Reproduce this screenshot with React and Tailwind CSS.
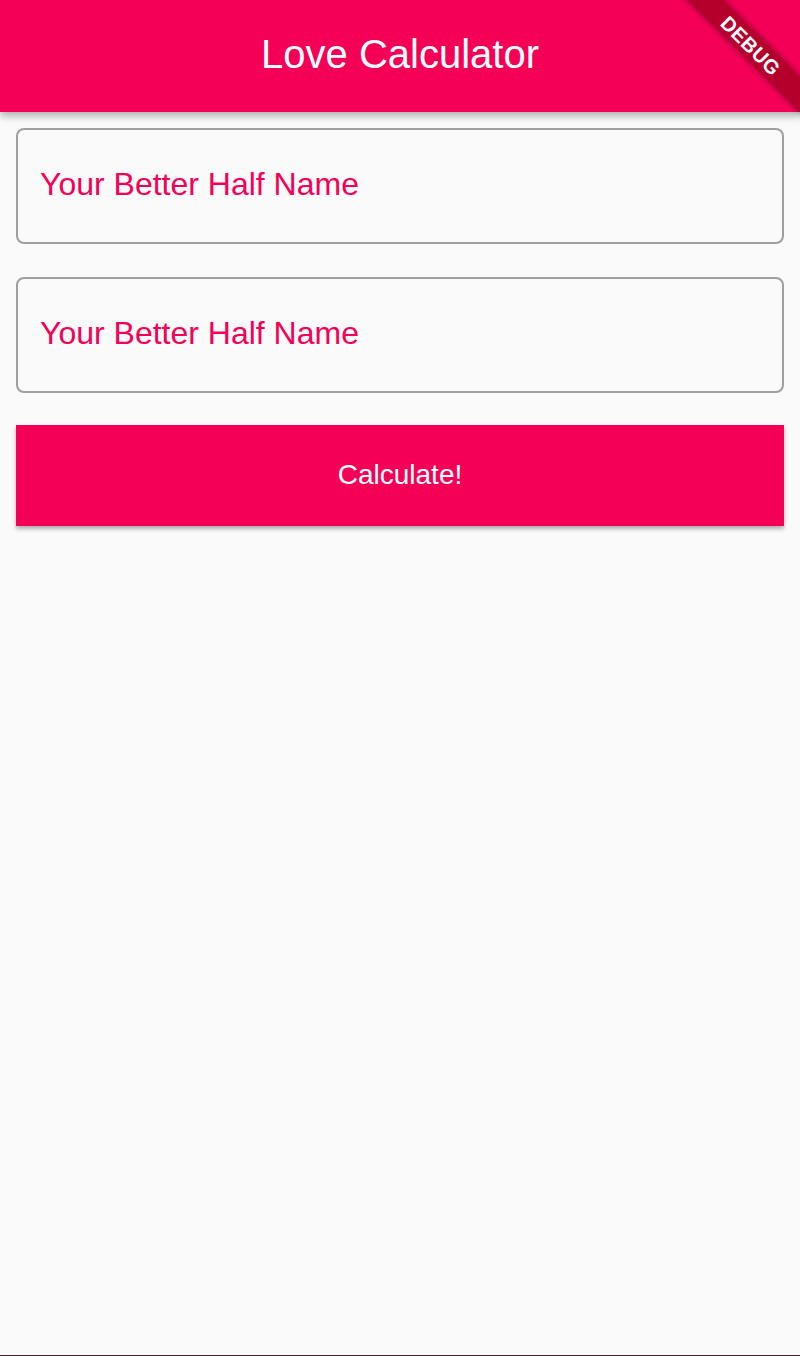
import React from "react";

function NameField({ label }) {
  return (
    <div className="h-[116px] rounded-[8px] border-2 border-[#9e9e9e] flex items-center px-[22px] pb-[4px]">
      <span className="text-[32px] text-[#f50057] leading-none">{label}</span>
    </div>
  );
}

function App() {
  return (
    <div
      className="relative w-[800px] h-[1356px] overflow-hidden bg-[#fafafa] flex flex-col"
      style={{ fontFamily: '"Liberation Sans", Arial, sans-serif' }}
    >
      <header className="relative z-10 h-[112px] bg-[#f50057] flex items-center justify-center pb-[4px] shadow-[0_4px_8px_rgba(0,0,0,0.3)]">
        <h1 className="text-[40px] text-white leading-none">Love Calculator</h1>
      </header>

      <div className="flex flex-col px-4 pt-4 gap-[33px]">
        <NameField label="Your Better Half Name" />
        <NameField label="Your Better Half Name" />
        <button className="h-[101px] bg-[#f50057] text-white text-[28px] pb-[2px] shadow-[0_3px_4px_rgba(0,0,0,0.3)] -mt-[1px]">
          Calculate!
        </button>
      </div>

      <div className="flex-1" />
      <div className="h-[1px] bg-[#5a1a30]" />

      {/* debug ribbon */}
      <div className="absolute z-20 left-[631px] top-[33px] w-[240px] h-[25px] rotate-45 bg-[#b6002c] shadow-[0_0_6px_rgba(0,0,0,0.45)] flex items-center justify-center">
        <span className="text-white text-[20px] font-bold leading-none tracking-[0.5px]">DEBUG</span>
      </div>
    </div>
  );
}

export default App;
